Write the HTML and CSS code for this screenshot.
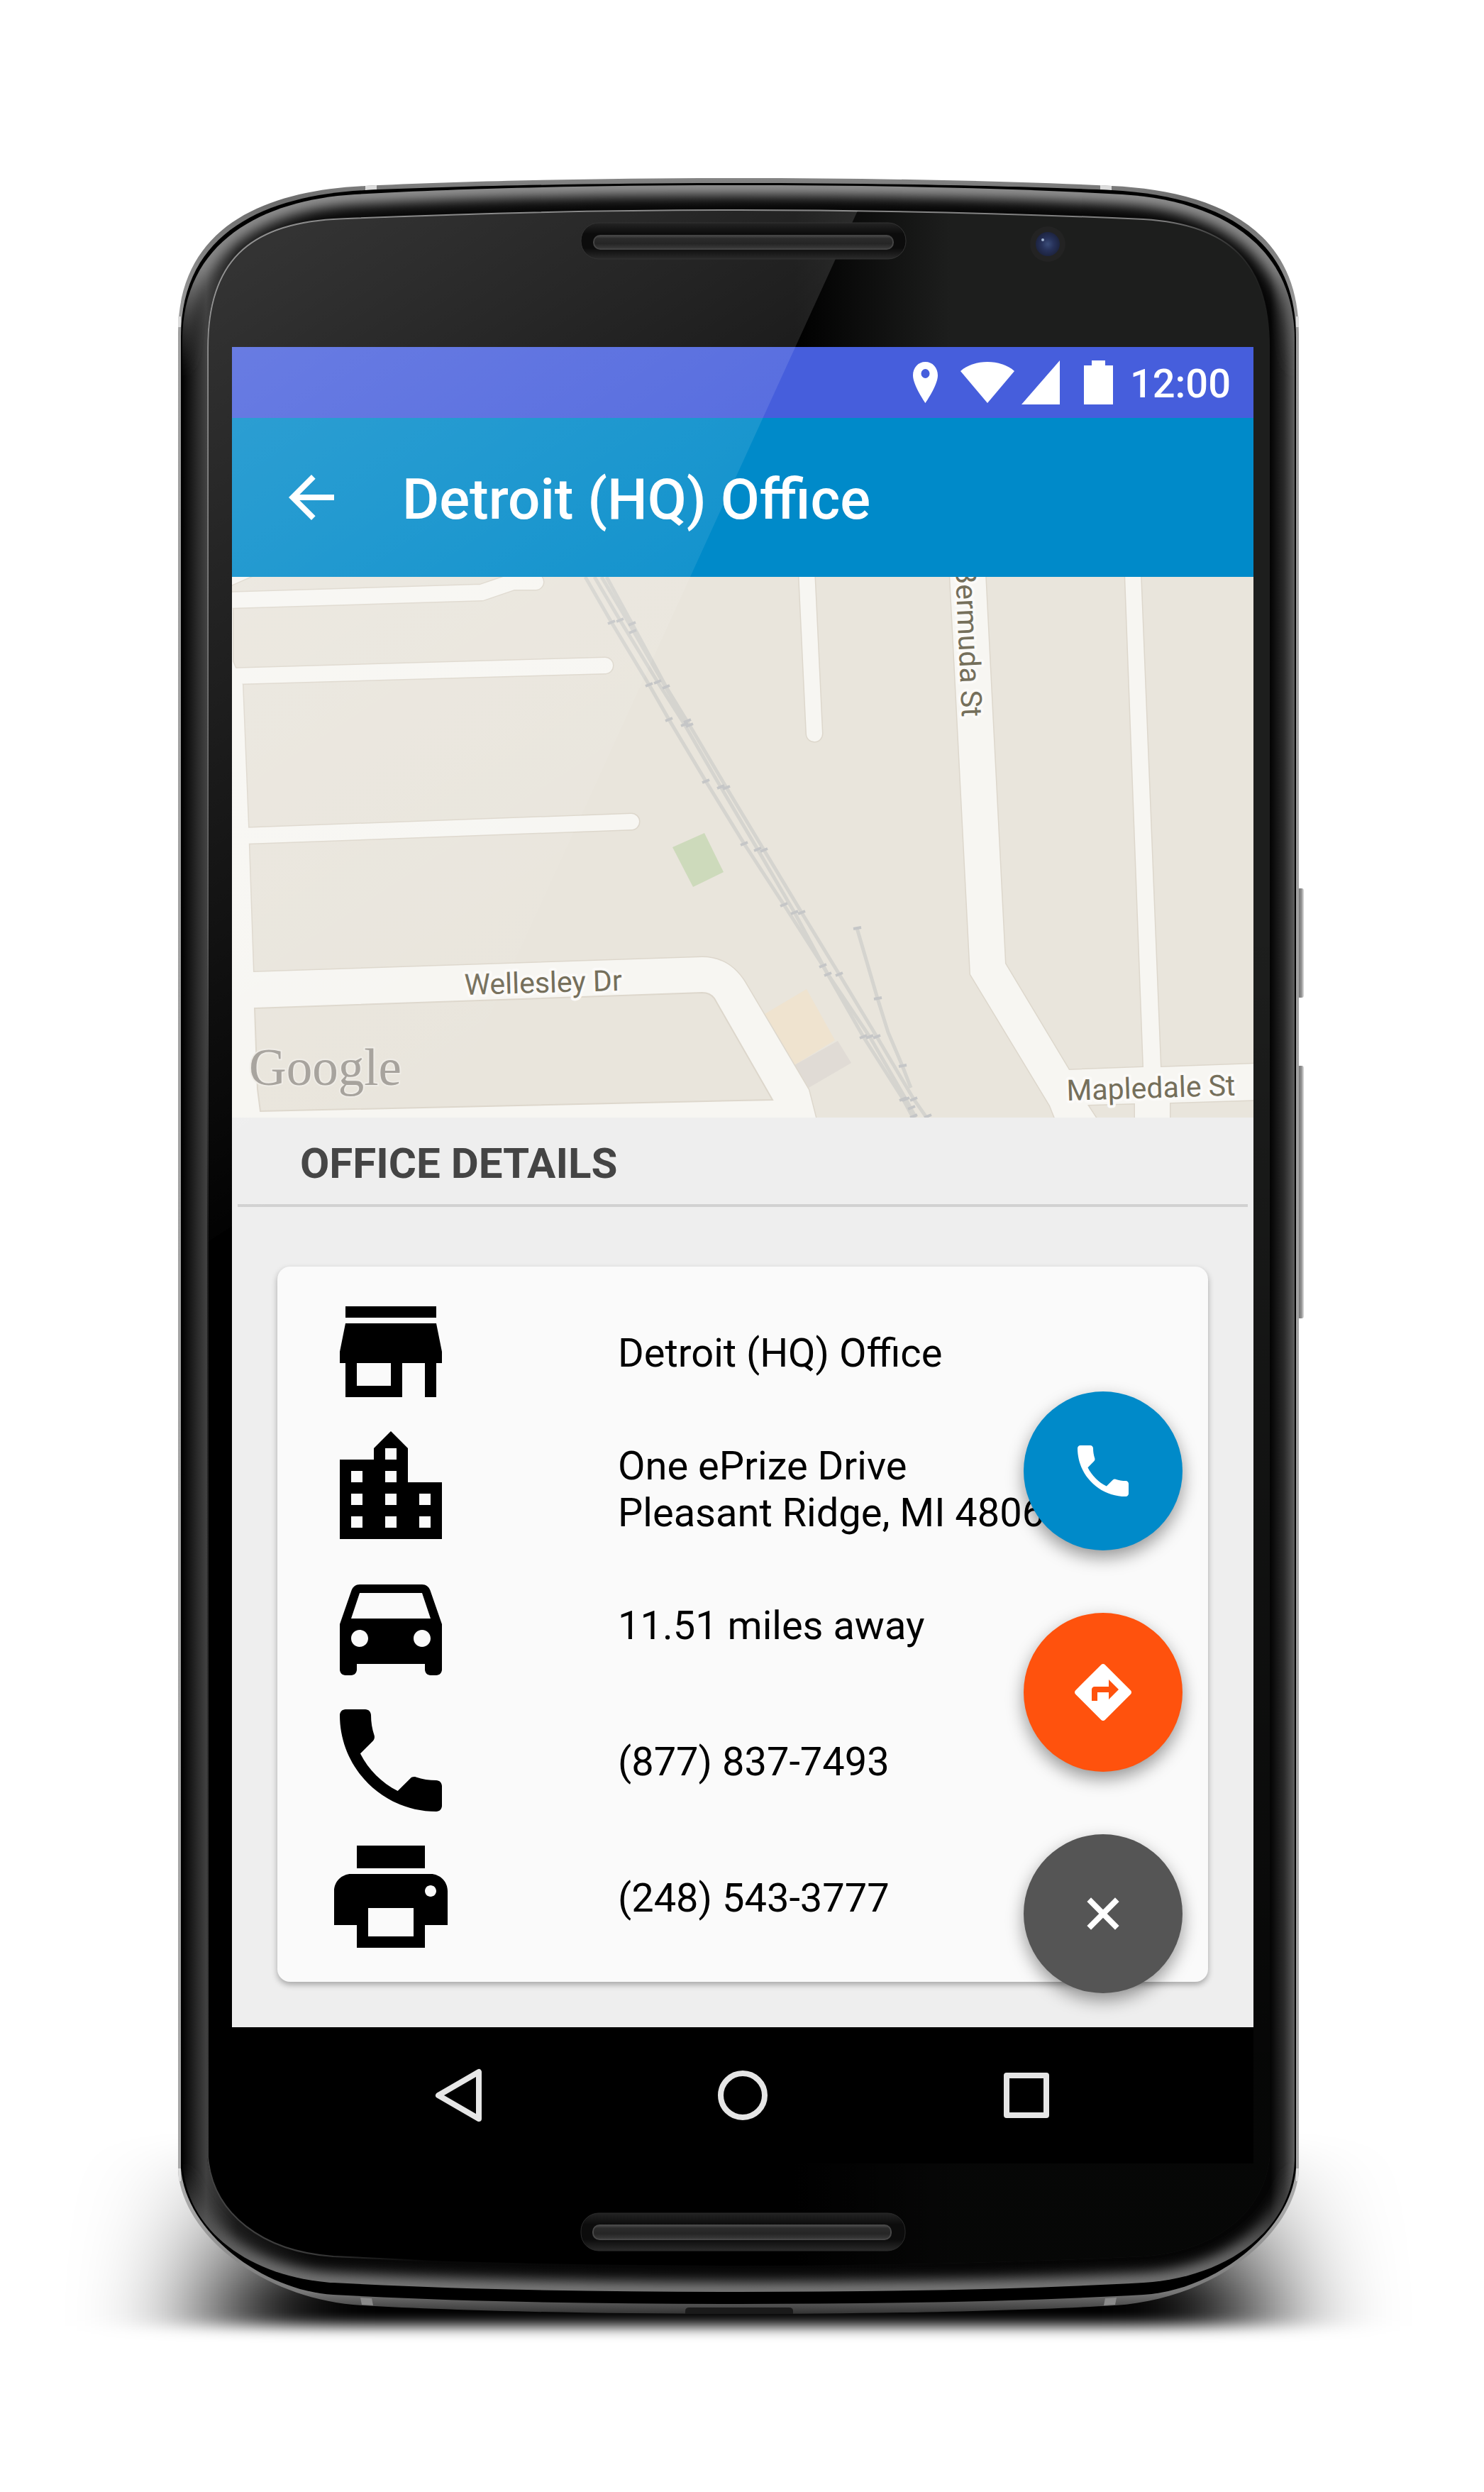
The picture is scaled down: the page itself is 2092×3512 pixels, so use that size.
FILE: index.html
```html
<!DOCTYPE html>
<html lang="en">
<head>
<meta charset="utf-8">
<meta name="viewport" content="width=device-width, initial-scale=1">
<title>Detroit (HQ) Office</title>
<link rel="stylesheet" href="styles.css">
</head>
<body>
<div class="phone">
  <svg class="shell" viewBox="251 251 1590 3010" preserveAspectRatio="none" aria-hidden="true">
    <defs>
      <linearGradient id="shadow-fill" gradientUnits="userSpaceOnUse" x1="0" y1="3010" x2="0" y2="3240">
        <stop offset="0" stop-opacity="0"/><stop offset=".5" stop-opacity=".45"/><stop offset="1" stop-opacity="1"/>
      </linearGradient>
      <filter id="shadow-blur" filterUnits="userSpaceOnUse" x="0" y="2800" width="2092" height="700"><feGaussianBlur stdDeviation="92 10"/></filter>
      <linearGradient id="metal" gradientUnits="userSpaceOnUse" x1="0" y1="251" x2="0" y2="3261">
        <stop offset="0" stop-color="#858585"/><stop offset=".01" stop-color="#6c6c6c"/><stop offset=".07" stop-color="#a0a0a0"/>
        <stop offset=".95" stop-color="#a8a8a8"/><stop offset=".99" stop-color="#777"/><stop offset="1" stop-color="#333"/>
      </linearGradient>
      <linearGradient id="lip" gradientUnits="userSpaceOnUse" x1="256" y1="0" x2="1826" y2="0">
        <stop offset="0" stop-color="#000"/><stop offset=".016" stop-color="#303030"/><stop offset=".022" stop-color="#404040"/><stop offset=".05" stop-color="#1a1a1a"/>
        <stop offset=".12" stop-color="#080808"/><stop offset=".978" stop-color="#050505"/><stop offset=".99" stop-color="#2a2a2a"/><stop offset="1" stop-color="#626262"/>
      </linearGradient>
      <linearGradient id="lip-light" gradientUnits="userSpaceOnUse" x1="0" y1="261" x2="0" y2="3230">
        <stop offset="0" stop-color="#999"/><stop offset=".04" stop-color="#888"/><stop offset=".09" stop-color="#555" stop-opacity="0"/>
        <stop offset=".94" stop-color="#555" stop-opacity="0"/><stop offset=".98" stop-color="#666"/><stop offset="1" stop-color="#808080"/>
      </linearGradient>
      <filter id="lip-blur" filterUnits="userSpaceOnUse" x="200" y="200" width="1700" height="3100"><feGaussianBlur stdDeviation="9"/></filter>
      <linearGradient id="rim" gradientUnits="userSpaceOnUse" x1="0" y1="296" x2="0" y2="3180">
        <stop offset="0" stop-color="#8a8a8a"/><stop offset=".1" stop-color="#777"/><stop offset=".35" stop-color="#555"/>
        <stop offset=".5" stop-color="#444" stop-opacity=".4"/><stop offset="1" stop-color="#444"/>
      </linearGradient>
      <linearGradient id="rim-right" gradientUnits="userSpaceOnUse" x1="1041" y1="0" x2="1790" y2="0">
        <stop offset="0" stop-color="#8a8a8a"/><stop offset=".8" stop-color="#7d7d7d"/><stop offset="1" stop-color="#555" stop-opacity="0"/>
      </linearGradient>
      <linearGradient id="rim-foot" gradientUnits="userSpaceOnUse" x1="292" y1="0" x2="600" y2="0">
        <stop offset="0" stop-color="#444"/><stop offset=".5" stop-color="#3a3a3a"/><stop offset="1" stop-color="#333" stop-opacity="0"/>
      </linearGradient>
      <linearGradient id="face-x" gradientUnits="userSpaceOnUse" x1="1120" y1="0" x2="1340" y2="0">
        <stop offset="0" stop-color="#000"/><stop offset="1" stop-color="#1d1e1d"/>
      </linearGradient>
      <linearGradient id="face-y" gradientUnits="userSpaceOnUse" x1="0" y1="1300" x2="0" y2="2900">
        <stop offset="0" stop-color="#000" stop-opacity="0"/><stop offset="1" stop-color="#000" stop-opacity=".78"/>
      </linearGradient>
      <linearGradient id="slot" x1="0" y1="0" x2="0" y2="1">
        <stop offset="0" stop-color="#242424"/><stop offset=".3" stop-color="#0c0c0c"/><stop offset=".7" stop-color="#0c0c0c"/><stop offset="1" stop-color="#2a2a2a"/>
      </linearGradient>
      <linearGradient id="grille" x1="0" y1="0" x2="0" y2="1">
        <stop offset="0" stop-color="#4c4c4c"/><stop offset=".2" stop-color="#2c2c2c"/><stop offset=".6" stop-color="#252525"/><stop offset="1" stop-color="#3c3c3c"/>
      </linearGradient>
      <radialGradient id="lens"><stop offset="0" stop-color="#3a4c78"/><stop offset=".5" stop-color="#27325a"/><stop offset="1" stop-color="#1d2440"/></radialGradient>
      <linearGradient id="side-key" x1="0" y1="0" x2="1" y2="0"><stop offset="0" stop-color="#6c6c6c"/><stop offset=".6" stop-color="#8d8d8d"/><stop offset="1" stop-color="#dedede"/></linearGradient>
      <path id="lip-path" d="M1041 261C850 261 650 265 500 274C370 282 257 340 257 480V3040C257 3140 350 3210 470 3217C650 3227 850 3230 1041 3230C1232 3230 1432 3227 1612 3217C1732 3210 1825 3140 1825 3040V480C1825 340 1712 282 1582 274C1432 265 1232 261 1041 261Z"/>
      <clipPath id="lip-clip"><use href="#lip-path"/></clipPath>
    </defs>
    <path d="M312 3278H1770V3010H312Z" fill="url(#shadow-fill)" filter="url(#shadow-blur)"/>
    <rect x="1829" y="1252" width="9" height="154" rx="3" fill="url(#side-key)"/>
    <rect x="1829" y="1502" width="9" height="356" rx="3" fill="url(#side-key)"/>
    <path fill="url(#metal)" d="M1041 251C850 251 650 255 515 262C380 268 251 315 251 470V3060C258 3150 370 3240 510 3249C650 3257 850 3261 1041 3261C1232 3261 1432 3257 1572 3249C1712 3240 1824 3150 1831 3060V470C1831 315 1702 268 1567 262C1432 255 1232 251 1041 251Z"/>
    <path fill="#dcdcdc" d="M515 262l16-1v6l-16 1zM1567 262l-16-1v6l16 1zM251 446h4v15h-4zM1827 446h4v15h-4zM251 3056h4v18h-3zM1831 3056h-4v18h3z"/>
    <path fill="#000" d="M1041 258C850 258 650 262 515 268C382 275 255 322 255 475V3056C262 3146 370 3228 470 3234C650 3244 850 3247 1041 3247C1232 3247 1432 3244 1612 3234C1712 3228 1820 3146 1827 3056V475C1827 322 1700 275 1567 268C1432 262 1232 258 1041 258Z"/>
    <path fill="#8a8a8a" d="M508 3238l16 1 2 10-16-1zM1574 3238l-16 1-2 10 16-1z"/>
    <path fill="#1a1a1a" d="M966 3261v-4q0-5 6-5h140q6 0 6 5v4z"/>
    <use href="#lip-path" fill="url(#lip)"/>
    <g clip-path="url(#lip-clip)"><use href="#lip-path" fill="none" stroke="url(#lip-light)" stroke-width="28" filter="url(#lip-blur)"/></g>
    <path fill="url(#face-x)" d="M1041 296C850 296 650 301 470 309C350 316 292 370 292 490V3040C300 3120 370 3173 470 3180C650 3189 850 3193 1041 3193C1232 3193 1432 3189 1612 3180C1712 3173 1782 3120 1790 3040V490C1790 370 1732 316 1612 309C1432 301 1232 296 1041 296Z"/>
    <path fill="url(#face-y)" d="M1041 1300H1790V3040C1782 3120 1712 3173 1612 3180C1432 3189 1232 3193 1041 3193Z"/>
    <path fill="none" stroke="url(#rim)" stroke-width="2" d="M293 3040V490C293 370 350 316 470 309C650 301 850 296 1041 296"/>
    <path fill="none" stroke="url(#rim-right)" stroke-width="2" d="M1041 296C1232 296 1432 301 1612 309C1732 316 1790 370 1790 490"/>
    <path fill="none" stroke="url(#rim-foot)" stroke-width="2" d="M293 3040C300 3120 370 3173 470 3180L600 3186"/>
    <rect x="819" y="3119" width="457" height="53" rx="25" fill="url(#slot)" stroke="#2b2b2b"/>
    <rect x="836" y="3136" width="420" height="20" rx="9" fill="url(#grille)" stroke="#484848" stroke-width="2"/>
    <circle cx="1477" cy="344" r="25" fill="#232323"/>
    <circle cx="1477" cy="344" r="17" fill="url(#lens)"/>
    <circle cx="1470" cy="338" r="2" fill="#9fb2cf"/>
  </svg>

  <div class="screen">
    <div class="status-bar">
      <svg class="status-pin" viewBox="0 0 35 58"><path fill="#fff" fill-rule="evenodd" d="M17.500 0C7.500 0 0 8 0 19c0 14 17.500 39 17.500 39S35 33 35 19C35 8 27.500 0 17.500 0zm0 10a6 6.500 0 1 1 0 13 6 6.500 0 0 1 0-13z"/></svg>
      <svg class="status-wifi" viewBox="0 0 76 58"><path fill="#fff" d="M38 58L0 13C10 4 24 0 38 0s28 4 38 13z"/></svg>
      <svg class="status-signal" viewBox="0 0 54 62"><path fill="#fff" d="M54 0v62H0z"/></svg>
      <svg class="status-battery" viewBox="0 0 41 62"><path fill="#fff" d="M11 0h19v7h11v55H0V7h11z"/></svg>
      <time class="clock">12:00</time>
    </div>
    <header class="app-bar">
      <button class="back" type="button" aria-label="Back">
        <svg viewBox="0 0 24 24"><path fill="#fff" d="M20 11H7.830l5.590-5.590L12 4l-8 8 8 8 1.410-1.410L7.830 13H20v-2z"/></svg>
      </button>
      <h1 class="title">Detroit (HQ) Office</h1>
    </header>

    <svg class="map" viewBox="0 0 1440 762" role="img" aria-label="Map around the office">
      <rect class="land" width="1440" height="762"/>
      <path fill="#cddabb" d="M621 381L666 361 693 416 650 437z"/>
      <path fill="#efe3cf" d="M751 616L810 581 850 653 793 688z"/>
      <path fill="#e0dbd5" d="M793 688L854 654 873 685 813 720z"/>
      <g class="rail">
        <path d="M498 0L535 64 588 152 616 201 668 288 722 376 778 462 833 548 890 648 946 736 960 762"/>
        <path d="M511 0L547 61 600 148 638 208 689 296 741 384 793 473 840 560 899 648 950 736 964 762"/>
        <path d="M528 0L564 66 612 155 645 209 697 297 750 385 803 473 856 560 909 648 961 736 982 766"/>
        <path d="M521 0L560 66 606 146 640 206"/>
        <path d="M881 495L910 594 925 642 945 689 957 720"/>
      </g>
      <path class="ties" d="M530 66l10-4M583 154l10-4M611 203l10-4M663 290l10-4M717 378l10-4M773 464l10-4M828 550l10-4M885 650l10-4M941 738l10-4M542 63l10-4M595 150l10-4M633 210l10-4M684 298l10-4M736 386l10-4M788 475l10-4M835 562l10-4M894 650l10-4M945 738l10-4M559 68l10-4M560 79l10-4M607 157l10-4M640 211l10-4M637 205l10-4M692 299l10-4M745 387l10-4M798 475l10-4M851 562l10-4M904 650l10-4M956 738l10-4M876 496l11-2M905 595l11-2M940 690l11-2M953 750l10-4M956 762l10-4M976 762l10-4"/>
      <g class="road-edge">
        <path d="M-20 8L30-14M-10 33L352 22 396 7H428M0 140L526 125M15 365L563 345M810-10L821 221"/>
        <path class="block" d="M-5 30L1 45V119L15 152 23 352 30 557 663 536Q701 536 723 571L813 723 825 770H-5zM1012-5L1041 560 1153 745 1163 770H1223L1206 744 1273 742V770H1322V741L1445 737V686L1309 691 1281-5H1259L1285 691 1180 695 1090 545 1062-5z"/>
      </g>
      <g class="road">
        <path d="M-20 8L30-14M-10 33L352 22 396 7H428M0 140L526 125M15 365L563 345M810-10L821 221"/>
        <path class="block" d="M-5 30L1 45V119L15 152 23 352 30 557 663 536Q701 536 723 571L813 723 825 770H-5zM1012-5L1041 560 1153 745 1163 770H1223L1206 744 1273 742V770H1322V741L1445 737V686L1309 691 1281-5H1259L1285 691 1180 695 1090 545 1062-5z"/>
      </g>
      <path class="island" d="M32 608L663 586Q674 586 680 594L762 737 40 753 36 722z"/>
      <g class="street">
        <text transform="translate(328 589) rotate(-1.600)">Wellesley Dr</text>
        <text transform="translate(1177 738) rotate(-1.800)">Mapledale St</text>
        <text transform="translate(1029 198) rotate(87.500)" text-anchor="end">Bermuda St</text>
      </g>
      <text class="attribution" x="24" y="716">Google</text>
    </svg>

    <main class="details">
      <h2 class="section-title">Office details</h2>
      <ul class="card">
        <li class="row">
          <svg class="row-icon" viewBox="0 0 24 24"><path d="M20 4H4v2h16V4zm1 10v-2l-1-5H4l-1 5v2h1v6h10v-6h4v6h2v-6h1zm-9 4H6v-4h6v4z"/></svg>
          <span class="row-text">Detroit (HQ) Office</span>
        </li>
        <li class="row">
          <svg class="row-icon" viewBox="0 0 24 24"><path d="M15 11V5l-3-3-3 3v2H3v14h18V11h-6zm-8 8H5v-2h2v2zm0-4H5v-2h2v2zm0-4H5V9h2v2zm6 8h-2v-2h2v2zm0-4h-2v-2h2v2zm0-4h-2V9h2v2zm0-4h-2V5h2v2zm6 12h-2v-2h2v2zm0-4h-2v-2h2v2z"/></svg>
          <address class="row-text">One ePrize Drive<br>Pleasant Ridge, MI 48069</address>
        </li>
        <li class="row">
          <svg class="row-icon" viewBox="0 0 24 24"><path d="M18.920 6.010C18.720 5.420 18.160 5 17.500 5h-11c-.660 0-1.210.420-1.420 1.010L3 12v8c0 .550.450 1 1 1h1c.550 0 1-.450 1-1v-1h12v1c0 .550.450 1 1 1h1c.550 0 1-.450 1-1v-8l-2.080-5.990zM6.500 16c-.830 0-1.500-.670-1.500-1.500S5.670 13 6.500 13s1.500.670 1.500 1.500S7.330 16 6.500 16zm11 0c-.830 0-1.500-.670-1.500-1.500s.670-1.500 1.500-1.500 1.500.670 1.500 1.500-.670 1.500-1.500 1.500zM5 11l1.500-4.500h11L19 11H5z"/></svg>
          <span class="row-text">11.51 miles away</span>
        </li>
        <li class="row">
          <svg class="row-icon" viewBox="0 0 24 24"><path d="M6.620 10.790c1.440 2.830 3.760 5.140 6.590 6.590l2.200-2.200c.270-.270.670-.360 1.020-.240 1.120.370 2.330.570 3.570.570.550 0 1 .450 1 1V20c0 .550-.450 1-1 1-9.390 0-17-7.610-17-17 0-.550.450-1 1-1h3.500c.550 0 1 .450 1 1 0 1.250.200 2.450.570 3.570.110.350.030.740-.250 1.020l-2.200 2.200z"/></svg>
          <span class="row-text">(877) 837-7493</span>
        </li>
        <li class="row">
          <svg class="row-icon" viewBox="0 0 24 24"><path d="M19 8H5c-1.660 0-3 1.340-3 3v6h4v4h12v-4h4v-6c0-1.660-1.340-3-3-3zm-3 11H8v-5h8v5zm3-7c-.550 0-1-.450-1-1s.450-1 1-1 1 .450 1 1-.450 1-1 1zm-1-9H6v4h12V3z"/></svg>
          <span class="row-text">(248) 543-3777</span>
        </li>
      </ul>
      <div class="actions">
        <button class="fab fab-call" type="button" aria-label="Call">
          <svg viewBox="0 0 24 24"><path fill="#fff" d="M6.620 10.790c1.440 2.830 3.760 5.140 6.590 6.590l2.200-2.200c.270-.270.670-.360 1.020-.240 1.120.370 2.330.570 3.570.570.550 0 1 .450 1 1V20c0 .550-.450 1-1 1-9.390 0-17-7.610-17-17 0-.550.450-1 1-1h3.500c.550 0 1 .450 1 1 0 1.250.200 2.450.570 3.570.110.350.030.740-.250 1.020l-2.200 2.200z"/></svg>
        </button>
        <button class="fab fab-route" type="button" aria-label="Directions">
          <svg viewBox="0 0 24 24"><path fill="#fff" d="M21.710 11.290l-9-9c-.390-.390-1.020-.390-1.410 0l-9 9c-.390.390-.390 1.020 0 1.410l9 9c.390.390 1.020.390 1.410 0l9-9c.390-.380.390-1.010 0-1.410zM14 14.500V12h-4v3H8v-4c0-.550.450-1 1-1h5V7.500l3.500 3.500-3.500 3.500z"/></svg>
        </button>
        <button class="fab fab-close" type="button" aria-label="Close menu">
          <svg viewBox="0 0 24 24"><path fill="none" stroke="#fff" stroke-width="2" d="M7.050 7.050l9.900 9.900M16.950 7.050l-9.900 9.900"/></svg>
        </button>
      </div>
    </main>

    <nav class="nav-bar">
      <button class="nav-key" type="button" aria-label="Back"><svg viewBox="0 0 96 96"><path d="M76 15v66L19 48z"/></svg></button>
      <button class="nav-key" type="button" aria-label="Home"><svg viewBox="0 0 96 96"><circle cx="48" cy="48" r="31"/></svg></button>
      <button class="nav-key" type="button" aria-label="Overview"><svg viewBox="0 0 96 96"><rect x="20" y="20" width="56" height="56"/></svg></button>
    </nav>
  </div>

  <svg class="glare" viewBox="251 251 1590 3010" preserveAspectRatio="none" aria-hidden="true">
    <defs>
      <linearGradient id="glare-fill" gradientUnits="userSpaceOnUse" x1="300" y1="400" x2="950" y2="1400">
        <stop offset="0" stop-color="#fff" stop-opacity=".2"/><stop offset="1" stop-color="#fff" stop-opacity="0"/>
      </linearGradient>
    </defs>
    <path fill="url(#glare-fill)" d="M1209 297L973 813 650 1520 293 1750V490C293 370 350 316 470 310C650 302 850 297 1041 297Z"/>
    <rect x="819" y="314" width="458" height="51" rx="25" fill="url(#slot)" stroke="#333"/>
    <rect x="837" y="332" width="422" height="19" rx="9" fill="url(#grille)" stroke="#444" stroke-width="2"/>
  </svg>
</div>
</body>
</html>
```
FILE: styles.css
```css
* {
  box-sizing: border-box;
}

body {
  margin: 0;
  padding: 251px 0;
  background: #fff;
  color: #000;
  font-family: Roboto, "Liberation Sans", sans-serif;
  font-size: 56px;
  line-height: 66px;
}

button {
  display: flex;
  align-items: center;
  justify-content: center;
  padding: 0;
  border: 0;
  background: none;
}

.phone {
  position: relative;
  max-width: 1590px;
  margin: 0 auto;
  padding: 238px 74px 212px 76px;
}

.shell,
.glare {
  position: absolute;
  inset: 0;
  width: 100%;
  height: 100%;
  overflow: visible;
  pointer-events: none;
}

.screen {
  position: relative;
  background: #eee;
}

.status-bar {
  display: flex;
  align-items: center;
  justify-content: flex-end;
  height: 100px;
  padding-right: 32px;
  background: #465edc;
  color: #fff;
}

.status-pin {
  width: 35px;
  height: 58px;
  margin-right: 32px;
}

.status-wifi {
  width: 76px;
  height: 58px;
  margin-right: 10px;
}

.status-signal {
  width: 54px;
  height: 62px;
  margin-right: 34px;
}

.status-battery {
  width: 41px;
  height: 62px;
  margin-right: 24px;
}

.clock {
  padding-top: 4px;
  font-weight: 500;
}

.app-bar {
  display: flex;
  align-items: center;
  gap: 80px;
  height: 224px;
  padding: 0 64px;
  background: #008ac9;
  color: #fff;
}

.back svg,
.fab svg,
.nav-key svg {
  width: 96px;
  height: 96px;
}

.title {
  margin: 0;
  padding-top: 6px;
  font-size: 80px;
  font-weight: 500;
  line-height: 96px;
}

.map {
  display: block;
  width: 100%;
}

.land {
  fill: #e9e5dc;
}

.rail {
  fill: none;
  stroke: #d5d4cf;
  stroke-width: 5;
}

.ties {
  fill: none;
  stroke: #c5c6c7;
  stroke-width: 4;
}

.road-edge,
.road {
  fill: none;
  stroke-linecap: round;
  stroke-linejoin: round;
}

.road-edge {
  stroke: #ddd7cc;
  stroke-width: 25;
}

.road {
  stroke: #f7f6f2;
  stroke-width: 22;
}

.road-edge .block {
  stroke-width: 3;
}

.road .block {
  fill: #f7f6f2;
  stroke: none;
}

.island {
  fill: #e9e5dc;
  stroke: #ddd7cc;
  stroke-width: 2;
}

.street {
  fill: #756f5b;
  stroke: #fbfaf8;
  stroke-width: 8;
  stroke-linejoin: round;
  paint-order: stroke;
  font-size: 41px;
}

.attribution {
  fill: #a5a19b;
  stroke: #efece6;
  stroke-width: 4;
  paint-order: stroke;
  font-family: "Liberation Serif", serif;
  font-size: 73px;
}

.details {
  position: relative;
  padding-bottom: 64px;
}

.section-title {
  margin: 0 8px 84px;
  padding: 32px 88px 24px;
  border-bottom: 4px solid #d1d1d1;
  color: #444;
  font-size: 60px;
  font-weight: 700;
  line-height: 66px;
  text-transform: uppercase;
}

.card {
  margin: 0 64px;
  padding: 24px 64px;
  border-radius: 18px;
  background: #fafafa;
  box-shadow: 0 4px 8px rgba(0, 0, 0, .3);
  list-style: none;
}

.row {
  display: flex;
  align-items: center;
  gap: 224px;
  height: 192px;
  white-space: nowrap;
}

.row-icon {
  flex: none;
  width: 192px;
  height: 192px;
}

.row-text {
  padding-top: 4px;
  font-style: normal;
}

.actions {
  position: absolute;
  right: 100px;
  bottom: 48px;
  display: grid;
  gap: 88px;
}

.fab {
  width: 224px;
  height: 224px;
  border-radius: 50%;
  box-shadow: 0 10px 24px rgba(0, 0, 0, .4);
}

.fab-call {
  background: #008ac9;
}

.fab-route {
  background: #ff520d;
}

.fab-close {
  background: #555;
}

.nav-bar {
  display: grid;
  grid-template-columns: repeat(3, 1fr);
  height: 192px;
  padding: 0 120px;
  background: #000;
}

.nav-key svg {
  fill: none;
  stroke: #e6e6e6;
  stroke-width: 8;
  stroke-linejoin: round;
}
```
